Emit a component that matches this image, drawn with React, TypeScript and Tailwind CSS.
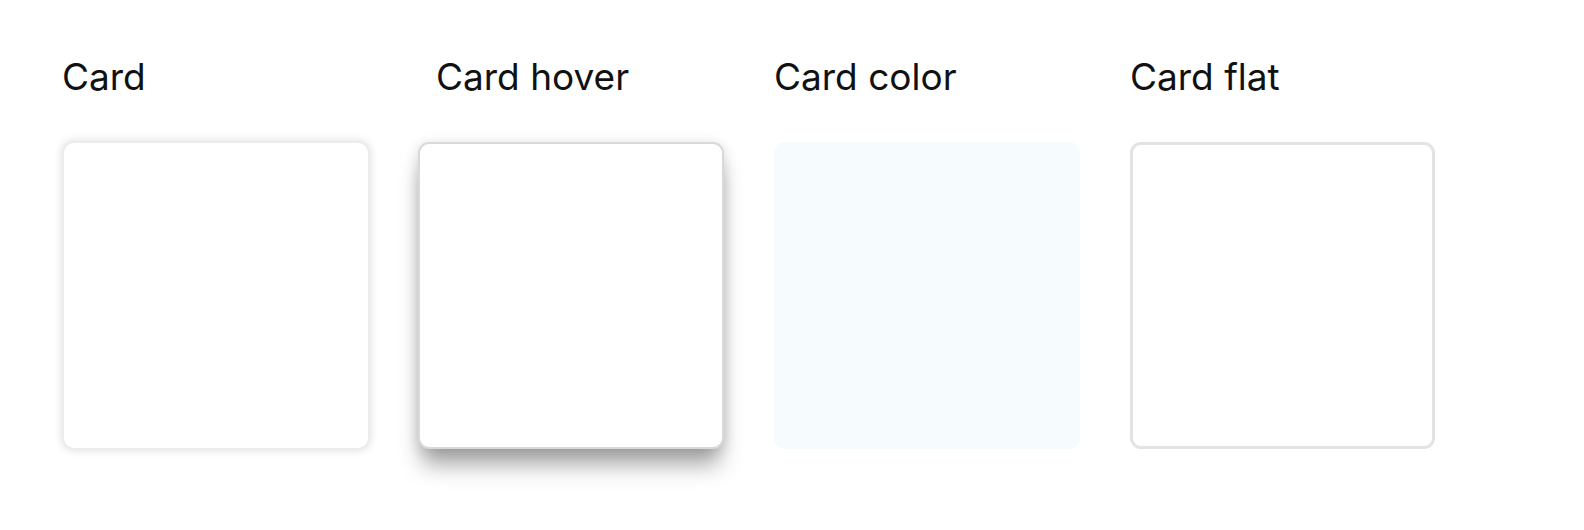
import React from "react";

const CARDS = [
  {
    title: "Card",
    titleClass: "",
    cardClass:
      "w-[308px] h-[309px] mt-[46px] bg-white border-2 border-[#ececec] rounded-[12px] shadow-[0_0_10px_rgba(0,0,0,0.14)]",
  },
  {
    title: "Card hover",
    titleClass: "ml-[18px]",
    cardClass:
      "w-[306px] h-[307px] mt-[47px] bg-white border-2 border-[#d9d9d9] rounded-[11px] shadow-[0_20px_22px_-4px_rgba(0,0,0,0.34),0_2px_14px_rgba(0,0,0,0.14)]",
  },
  {
    title: "Card color",
    titleClass: "",
    cardClass: "w-[306px] h-[307px] mt-[47px] bg-[#f6fbfe] rounded-[11px]",
  },
  {
    title: "Card flat",
    titleClass: "",
    cardClass:
      "w-[305px] h-[307px] mt-[47px] bg-white border-[3px] border-[#e3e3e3] rounded-[11px]",
  },
];

export default function App() {
  return (
    <div className="min-h-screen bg-white text-[#111] font-['Inter',sans-serif] pt-[59px] pl-[62px]">
      <div className="flex gap-[48px]">
        {CARDS.map((c) => (
          <div key={c.title} className="w-[308px] flex flex-col">
            <h2 className={`text-[37px] leading-[36px] font-normal ${c.titleClass}`}>
              {c.title}
            </h2>
            <div className={c.cardClass} />
          </div>
        ))}
      </div>
    </div>
  );
}
